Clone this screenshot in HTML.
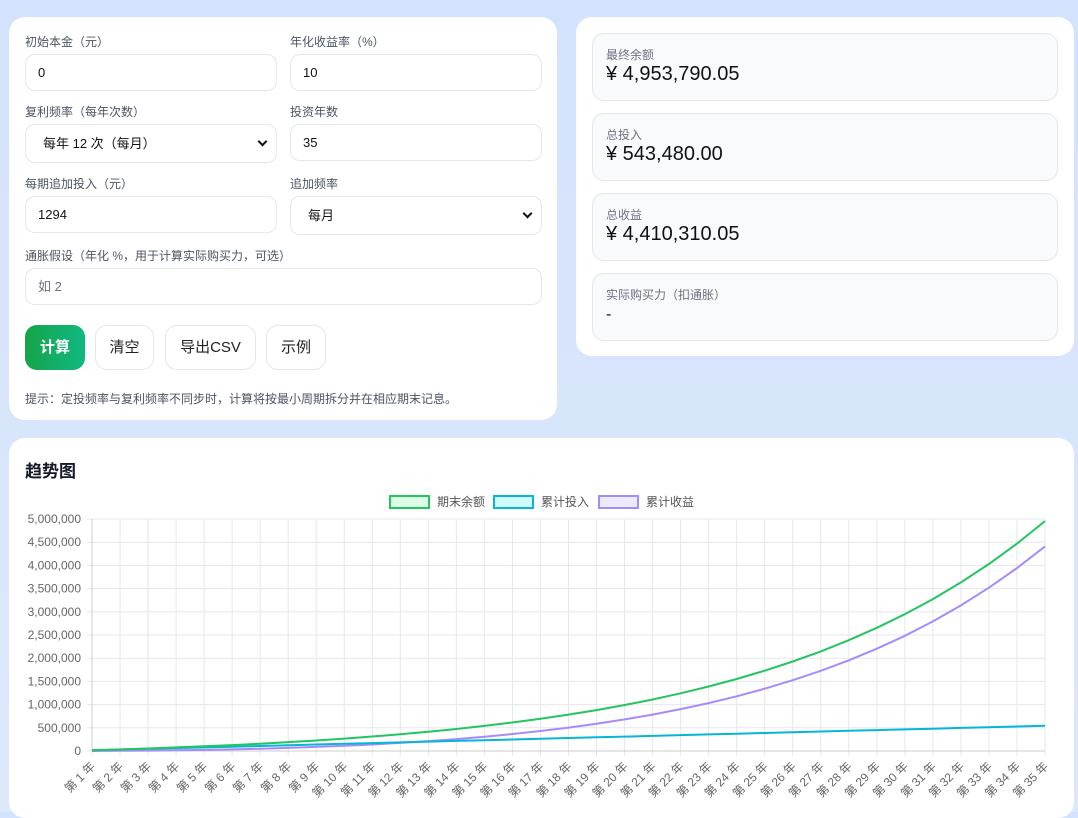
<!DOCTYPE html>
<html><head><meta charset="utf-8">
<style>
*{box-sizing:border-box}
body{margin:0;width:1078px;height:812px;overflow:hidden;background:linear-gradient(180deg,#d3e3fd 0%,#dde8fb 100%);font-family:"Liberation Sans","Noto Sans CJK SC",sans-serif;color:#111827;position:relative}
.card{position:absolute;background:#fff;border-radius:16px}
.lbl{position:absolute;font-size:12px;color:#4b5563}
.inp{position:absolute;height:37px;border:1px solid #e5e7eb;border-radius:10px;font-size:13px;padding-left:12px;line-height:35px;color:#111}
.sel{padding-left:17px}
.sel:after{content:"";position:absolute;right:10px;top:13px;width:5px;height:5px;border-right:2px solid #111;border-bottom:2px solid #111;transform:rotate(45deg)}
.btn{position:absolute;top:308px;height:45px;border:1px solid #e5e7eb;border-radius:12px;font-size:15px;line-height:43px;text-align:center;color:#222}
.box{position:absolute;left:16px;width:466px;height:68px;border:1px solid #e5e7eb;border-radius:12px;background:#f9fafb}
.box .t{position:absolute;left:13px;top:12px;font-size:12px;color:#6b7280}
.box .v{position:absolute;left:13px;top:29px;font-size:20px;color:#111}
</style></head><body>
<div class="card" style="left:9px;top:17px;width:548px;height:403px">
<div class="lbl" style="left:16px;top:16px">初始本金（元）</div>
<div class="lbl" style="left:281px;top:16px">年化收益率（%）</div>
<div class="inp" style="left:16px;top:37px;width:252px">0</div>
<div class="inp" style="left:281px;top:37px;width:252px">10</div>
<div class="lbl" style="left:16px;top:86px">复利频率（每年次数）</div>
<div class="lbl" style="left:281px;top:86px">投资年数</div>
<div class="inp sel" style="left:16px;top:107px;width:252px;height:39px;line-height:37px">每年 12 次（每月）</div>
<div class="inp" style="left:281px;top:107px;width:252px">35</div>
<div class="lbl" style="left:16px;top:158px">每期追加投入（元）</div>
<div class="lbl" style="left:281px;top:158px">追加频率</div>
<div class="inp" style="left:16px;top:179px;width:252px">1294</div>
<div class="inp sel" style="left:281px;top:179px;width:252px;height:39px;line-height:37px">每月</div>
<div class="lbl" style="left:16px;top:230px">通胀假设（年化 %，用于计算实际购买力，可选）</div>
<div class="inp" style="left:16px;top:251px;width:517px;color:#6b7280">如 2</div>
<div class="btn" style="left:16px;width:60px;background:linear-gradient(90deg,#16a34a,#10b981);border:none;color:#fff;font-weight:bold;line-height:45px">计算</div>
<div class="btn" style="left:86px;width:59px">清空</div>
<div class="btn" style="left:156px;width:91px">导出CSV</div>
<div class="btn" style="left:257px;width:60px">示例</div>
<div class="lbl" style="left:16px;top:373px;color:#4b5563">提示：定投频率与复利频率不同步时，计算将按最小周期拆分并在相应期末记息。</div>
</div>
<div class="card" style="left:576px;top:17px;width:498px;height:339px">
<div class="box" style="top:16px"><div class="t">最终余额</div><div class="v">¥ 4,953,790.05</div></div>
<div class="box" style="top:96px"><div class="t">总投入</div><div class="v">¥ 543,480.00</div></div>
<div class="box" style="top:176px"><div class="t">总收益</div><div class="v">¥ 4,410,310.05</div></div>
<div class="box" style="top:256px"><div class="t">实际购买力（扣通胀）</div><div class="v" style="font-size:16px;top:32px">-</div></div>
</div>
<div class="card" style="left:9px;top:438px;width:1065px;height:380px">
<div style="position:absolute;left:16px;top:19px;font-size:17px;font-weight:bold">趋势图</div>
</div>
<svg id="ch" width="1078" height="812" style="position:absolute;left:0;top:0" font-family="Liberation Sans,Noto Sans CJK SC,sans-serif"></svg>
<script>
var s='',X0=92,X1=1045,Y0=751,Y1=519;
function x(i){return X0+(X1-X0)*i/34}
function y(v){return Y0-(Y0-Y1)*v/5e6}
for(var k=0;k<=10;k++){var yy=y(k*5e5);s+='<line x1="'+(X0-5)+'" x2="'+X1+'" y1="'+yy+'" y2="'+yy+'" stroke="#e5e7eb"/>';
s+='<text x="81" y="'+(yy+4)+'" font-size="12" fill="#666" text-anchor="end">'+(k*5e5).toLocaleString('en-US')+'</text>';}
for(var i=0;i<35;i++){var xx=x(i);s+='<line x1="'+xx+'" x2="'+xx+'" y1="'+Y1+'" y2="'+(Y0+5)+'" stroke="#e5e7eb"/>';
s+='<text transform="translate('+(xx+4)+','+(Y0+16)+') rotate(-45)" font-size="12" fill="#666" text-anchor="end">第 '+(i+1)+' 年</text>';}
s+='<line x1="'+X0+'" x2="'+X0+'" y1="'+Y1+'" y2="'+Y0+'" stroke="#ccc"/><line x1="'+X0+'" x2="'+X1+'" y1="'+Y0+'" y2="'+Y0+'" stroke="#ccc"/>';
var r=0.1/12,b=[],c=[],g=[];
for(i=1;i<=35;i++){var m=12*i,fv=1294*(Math.pow(1+r,m)-1)/r*(1+r);b.push(fv);c.push(15528*i);g.push(fv-15528*i);}
function pl(a,col){var p=a.map(function(v,i){return x(i).toFixed(1)+','+y(v).toFixed(1)}).join(' ');return '<polyline points="'+p+'" fill="none" stroke="'+col+'" stroke-width="2"/>'}
s+=pl(g,'#a78bfa')+pl(c,'#06b6d4')+pl(b,'#22c55e');
function lg(x0,col,fill,t){return '<rect x="'+x0+'" y="496" width="39" height="12" fill="'+fill+'" stroke="'+col+'" stroke-width="2"/><text x="'+(x0+47)+'" y="506" font-size="12" fill="#555">'+t+'</text>'}
s+=lg(390,'#22c55e','#dcfce7','期末余额')+lg(494,'#06b6d4','#cffafe','累计投入')+lg(599,'#a78bfa','#ede9fe','累计收益');
document.getElementById('ch').innerHTML=s;
</script>
</body></html>
